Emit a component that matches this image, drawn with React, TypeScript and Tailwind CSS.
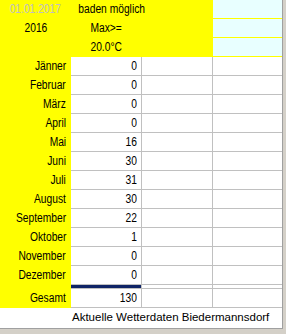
const MONTHS: [string, number][] = [
  ["Jänner", 0],
  ["Februar", 0],
  ["März", 0],
  ["April", 0],
  ["Mai", 16],
  ["Juni", 30],
  ["Juli", 31],
  ["August", 30],
  ["September", 22],
  ["Oktober", 1],
  ["November", 0],
  ["Dezember", 0],
];

// narrow look: Arial metrics squeezed horizontally
const Narrow = ({ children, origin = "origin-right" }: { children: React.ReactNode; origin?: string }) => (
  <span className={`inline-block whitespace-nowrap scale-x-[0.82] ${origin}`}>{children}</span>
);

const HeaderRow = ({ left, mid, leftGrey }: { left?: string; mid?: string; leftGrey?: boolean }) => (
  <div className="flex h-[19px]">
    <div
      className={`w-[71px] bg-[#ffff00] text-center leading-[18px] ${
        leftGrey ? "text-[#c0c0c0]" : ""
      }`}
    >
      {left && <Narrow origin="origin-center">{left}</Narrow>}
    </div>
    <div className="w-[142px] bg-[#ffff00] leading-[18px]">
      <div className="w-[71px] text-center">
        {mid && <Narrow origin="origin-center">{mid}</Narrow>}
      </div>
    </div>
    <div className="w-[69px] bg-[#e8ffff] border-b border-[#ffff00]" />
  </div>
);

const DataRow = ({ label, value }: { label: string; value: number | string }) => (
  <div className="flex h-[19px]">
    <div className="w-[71px] bg-[#ffff00] text-right pr-[5px] leading-[19px]">
      <Narrow>{label}</Narrow>
    </div>
    <div className="w-[71px] bg-white border-r border-b border-[#c0c0c0] text-right pr-[4px] leading-[18px]">
      <Narrow>{value}</Narrow>
    </div>
    <div className="w-[71px] bg-white border-r border-b border-[#c0c0c0]" />
    <div className="w-[69px] bg-white border-b border-[#c0c0c0]" />
  </div>
);

export default function App() {
  return (
    <div className="w-[286px] h-[334px] bg-[#d4d0c8] overflow-hidden">
      <div className="w-[283px] h-[329px] bg-white border-r border-b border-[#a0a0a0] flex flex-col font-['Liberation_Sans',sans-serif] text-[12.5px] text-black">
        {/* header */}
        <HeaderRow left="01.01.2017" mid="baden möglich" leftGrey />
        <HeaderRow left="2016" mid="Max>=" />
        <HeaderRow mid="20.0°C" />

        {/* months */}
        {MONTHS.map(([m, v]) => (
          <DataRow key={m} label={m} value={v} />
        ))}

        {/* sum separator */}
        <div className="flex h-[4px]">
          <div className="w-[71px] bg-[#ffff00]" />
          <div className="w-[71px] bg-[#0f2466] border-r border-b border-[#c0c0c0]" />
          <div className="w-[71px] border-r border-b border-[#c0c0c0]" />
          <div className="w-[69px] border-b border-[#c0c0c0]" />
        </div>

        <DataRow label="Gesamt" value={130} />

        {/* footer */}
        <div className="flex-1 flex items-center pl-[72px] text-[11.5px] whitespace-nowrap">
          Aktuelle Wetterdaten Biedermannsdorf
        </div>
      </div>
    </div>
  );
}
